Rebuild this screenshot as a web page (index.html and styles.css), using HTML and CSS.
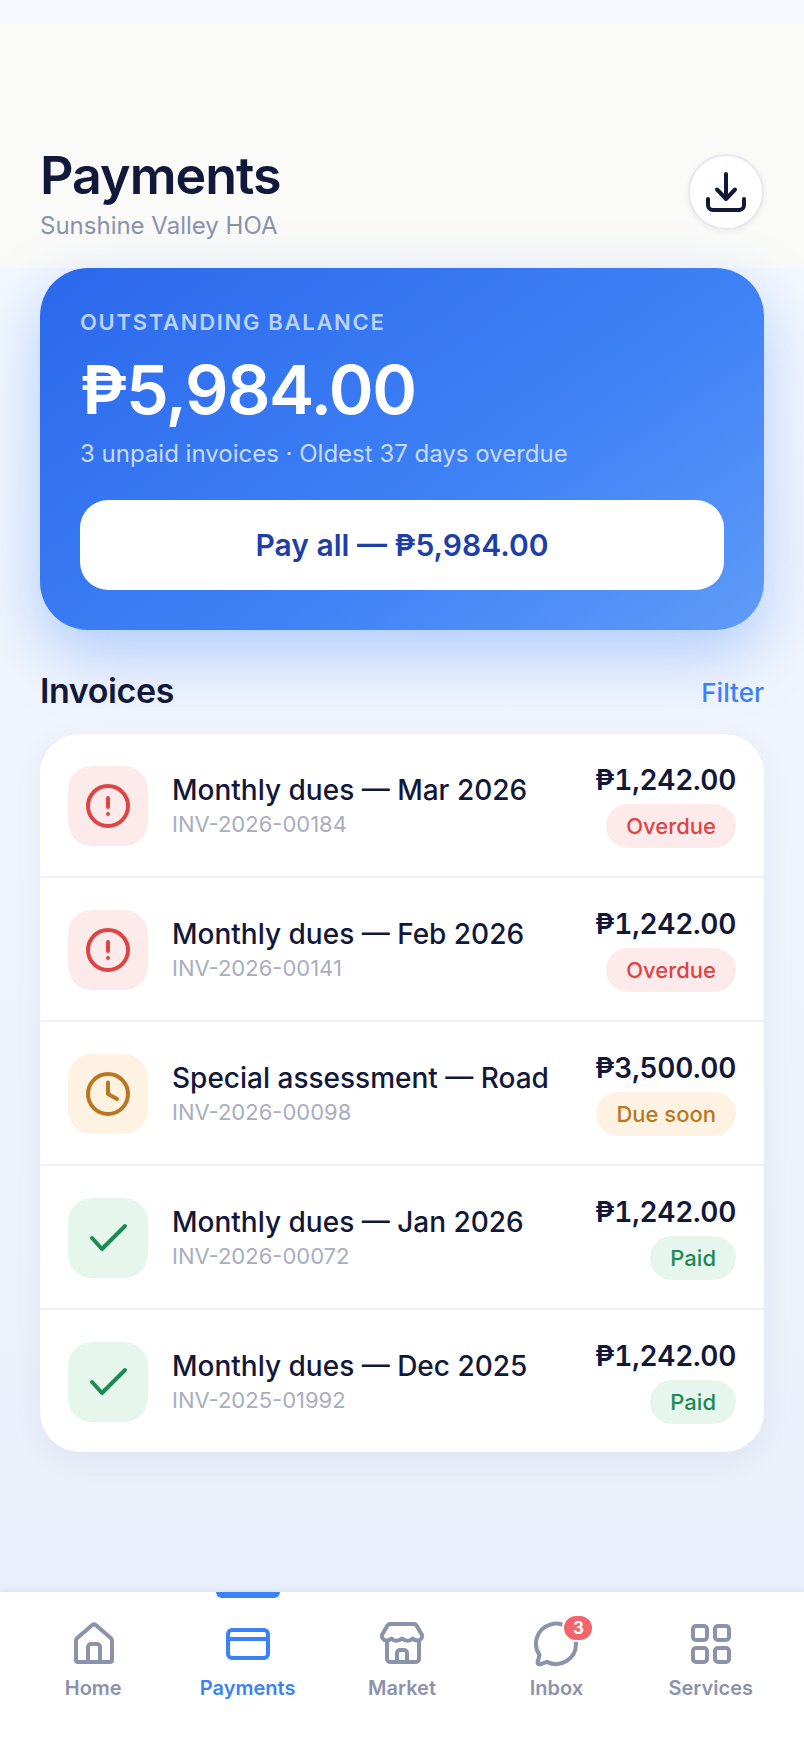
FILE: index.html
```html
<!DOCTYPE html>
<html lang="en">
<head>
  <meta charset="UTF-8" />
  <meta name="viewport" content="width=device-width, initial-scale=1.0" />
  <title>Payments</title>
  <link rel="stylesheet" href="styles.css">
</head>
<body>
  <div class="page">
    <header class="header">
      <div>
        <h1>Payments</h1>
        <p class="org">Sunshine Valley HOA</p>
      </div>
      <button class="download" aria-label="Download">
        <svg width="40" height="40" viewBox="0 0 40 40" fill="none" stroke="#12183a" stroke-width="4" stroke-linecap="round" stroke-linejoin="round">
          <path d="M20 2v25M11 17.500l9 9.500 9-9.500"/>
          <path d="M2 27v6a5 5 0 0 0 5 5h26a5 5 0 0 0 5-5v-6"/>
        </svg>
      </button>
    </header>

    <main class="main">
      <section class="balance">
        <div class="balance-label">OUTSTANDING BALANCE</div>
        <div class="balance-amount">₱5,984.00</div>
        <div class="balance-note">3 unpaid invoices · Oldest 37 days overdue</div>
        <button class="pay-all">Pay all — ₱5,984.00</button>
      </section>

      <div class="section-head">
        <h2>Invoices</h2>
        <a class="filter">Filter</a>
      </div>

      <section class="invoices">
        <div class="invoice">
          <div class="inv-icon red">
            <svg width="48" height="48" viewBox="0 0 48 48" fill="none" stroke="currentColor" stroke-width="4" stroke-linecap="round"><circle cx="24" cy="24" r="20"/><path d="M24 16v9"/><path d="M24 32v.1"/></svg>
          </div>
          <div class="inv-text">
            <div class="inv-title">Monthly dues — Mar 2026</div>
            <div class="inv-id">INV-2026-00184</div>
          </div>
          <div class="inv-right">
            <div class="inv-amount">₱1,242.00</div>
            <span class="pill red">Overdue</span>
          </div>
        </div>
        <div class="invoice">
          <div class="inv-icon red">
            <svg width="48" height="48" viewBox="0 0 48 48" fill="none" stroke="currentColor" stroke-width="4" stroke-linecap="round"><circle cx="24" cy="24" r="20"/><path d="M24 16v9"/><path d="M24 32v.1"/></svg>
          </div>
          <div class="inv-text">
            <div class="inv-title">Monthly dues — Feb 2026</div>
            <div class="inv-id">INV-2026-00141</div>
          </div>
          <div class="inv-right">
            <div class="inv-amount">₱1,242.00</div>
            <span class="pill red">Overdue</span>
          </div>
        </div>
        <div class="invoice">
          <div class="inv-icon amber">
            <svg width="48" height="48" viewBox="0 0 48 48" fill="none" stroke="currentColor" stroke-width="4" stroke-linecap="round" stroke-linejoin="round"><circle cx="24" cy="24" r="20"/><path d="M24 12.500V24l9 5"/></svg>
          </div>
          <div class="inv-text">
            <div class="inv-title">Special assessment — Road</div>
            <div class="inv-id">INV-2026-00098</div>
          </div>
          <div class="inv-right">
            <div class="inv-amount">₱3,500.00</div>
            <span class="pill amber">Due soon</span>
          </div>
        </div>
        <div class="invoice">
          <div class="inv-icon green">
            <svg width="48" height="48" viewBox="0 0 48 48" fill="none" stroke="currentColor" stroke-width="4" stroke-linecap="round" stroke-linejoin="round"><path d="M8 24l10 11L41 12"/></svg>
          </div>
          <div class="inv-text">
            <div class="inv-title">Monthly dues — Jan 2026</div>
            <div class="inv-id">INV-2026-00072</div>
          </div>
          <div class="inv-right">
            <div class="inv-amount">₱1,242.00</div>
            <span class="pill green">Paid</span>
          </div>
        </div>
        <div class="invoice">
          <div class="inv-icon green">
            <svg width="48" height="48" viewBox="0 0 48 48" fill="none" stroke="currentColor" stroke-width="4" stroke-linecap="round" stroke-linejoin="round"><path d="M8 24l10 11L41 12"/></svg>
          </div>
          <div class="inv-text">
            <div class="inv-title">Monthly dues — Dec 2025</div>
            <div class="inv-id">INV-2025-01992</div>
          </div>
          <div class="inv-right">
            <div class="inv-amount">₱1,242.00</div>
            <span class="pill green">Paid</span>
          </div>
        </div>
      </section>
    </main>

    <nav class="tabbar">
      <a class="tab">
        <svg width="48" height="48" viewBox="-1 0 48 48" fill="none" stroke="currentColor" stroke-width="4" stroke-linecap="round" stroke-linejoin="round"><path d="M6 20.500a3 3 0 0 1 1-2.200L22 5.200a3 3 0 0 1 4 0l15 13.100a3 3 0 0 1 1 2.200V40a2 2 0 0 1-2 2H8a2 2 0 0 1-2-2z"/><path d="M18 42V27a3 3 0 0 1 3-3h6a3 3 0 0 1 3 3v15"/></svg>
        <span>Home</span>
      </a>
      <a class="tab active">
        <span class="tab-mark"></span>
        <svg width="48" height="48" viewBox="0 0 48 48" fill="none" stroke="currentColor" stroke-width="4" stroke-linecap="round" stroke-linejoin="round"><rect x="4" y="10" width="40" height="28" rx="4"/><path d="M4 19h40"/></svg>
        <span>Payments</span>
      </a>
      <a class="tab">
        <svg width="48" height="48" viewBox="0 0 48 48" fill="none" stroke="currentColor" stroke-width="4" stroke-linecap="round" stroke-linejoin="round"><path d="M12 4h24c1.200 0 2 .5 2.600 1.500L44 15c.8 2-1 5-4 5.500-2.500.3-4-.5-5.500-2-2.500 3-7 3-10.500 0-3.500 3-8 3-10.500 0-1.500 1.500-3 2.300-5.500 2-3-.5-4.800-3.500-4-5.500L9.400 5.500C10 4.500 10.800 4 12 4z"/><path d="M9 21v18a3 3 0 0 0 3 3h26a3 3 0 0 0 3-3V21"/><path d="M19 42v-9a3 3 0 0 1 3-3h4a3 3 0 0 1 3 3v9"/></svg>
        <span>Market</span>
      </a>
      <a class="tab">
        <span class="tab-icon">
          <svg width="48" height="48" viewBox="0 0 48 48" fill="none" stroke="currentColor" stroke-width="4" stroke-linecap="round" stroke-linejoin="round"><path d="M44 24a20 20 0 0 1-29 17.900l-7 2.400a1.800 1.800 0 0 1-2.300-2.300L7.500 35A20 20 0 1 1 44 24z"/></svg>
          <b class="badge">3</b>
        </span>
        <span>Inbox</span>
      </a>
      <a class="tab">
        <svg width="48" height="48" viewBox="0 0 48 48" fill="none" stroke="currentColor" stroke-width="4" stroke-linecap="round" stroke-linejoin="round"><rect x="6" y="6" width="14" height="14" rx="3"/><rect x="28" y="6" width="14" height="14" rx="3"/><rect x="6" y="28" width="14" height="14" rx="3"/><rect x="28" y="28" width="14" height="14" rx="3"/></svg>
        <span>Services</span>
      </a>
    </nav>
  </div>
</body>
</html>
```

FILE: styles.css
```css
* {
  box-sizing: border-box;
}
body {
  margin: 0;
  font-family: Inter, "Liberation Sans", sans-serif;
  color: #12183a;
}
h1, h2, p {
  margin: 0;
}
button {
  font-family: inherit;
  border: none;
}
.page {
  height: 1748px;
  display: flex;
  flex-direction: column;
  padding-top: 24px;
  background: linear-gradient(180deg, #f6f9ff 0%, #e8eefa 100%);
  overflow: hidden;
}
.header {
  height: 244px;
  flex: none;
  background: #fafaf8;
  display: flex;
  justify-content: space-between;
  align-items: flex-end;
  padding: 0 40px 26px;
}
.header h1 {
  font-size: 52px;
  line-height: 60px;
  font-weight: 600;
  letter-spacing: -1px;
}
.org {
  font-size: 24px;
  line-height: 32px;
  margin-top: 4px;
  color: #8b93ab;
}
.download {
  width: 76px;
  height: 76px;
  border-radius: 50%;
  background: #fff;
  border: 2px solid #e8e9f0;
  box-shadow: 0 2px 6px rgba(20, 26, 56, .06);
  display: flex;
  align-items: center;
  justify-content: center;
  padding: 0;
  margin-bottom: 12px;
}
.main {
  flex: 1;
  padding: 0 40px;
}
.balance {
  height: 362px;
  border-radius: 48px;
  padding: 42px 40px 0;
  background: linear-gradient(145deg, #2b68ec 0%, #3e82f6 60%, #5f9bf8 100%);
  box-shadow: 0 24px 64px rgba(59, 130, 246, .36);
  color: #fff;
}
.balance-label {
  font-size: 22px;
  line-height: 24px;
  font-weight: 600;
  letter-spacing: 1.700px;
  color: #bcd2fb;
}
.balance-amount {
  font-size: 68px;
  line-height: 80px;
  font-weight: 600;
  letter-spacing: -1.500px;
  margin-top: 15px;
}
.balance-note {
  font-size: 24px;
  line-height: 32px;
  margin-top: 9px;
  color: #c9dafc;
}
.pay-all {
  display: block;
  width: 100%;
  height: 90px;
  margin-top: 30px;
  background: #fff;
  border-radius: 28px;
  color: #1e3fa8;
  font-size: 30px;
  font-weight: 600;
}
.section-head {
  display: flex;
  justify-content: space-between;
  align-items: center;
  margin-top: 40px;
  height: 44px;
}
.section-head h2 {
  font-size: 34px;
  font-weight: 600;
  letter-spacing: -.4px;
  margin-bottom: 4px;
}
.filter {
  font-size: 26px;
  font-weight: 500;
  color: #3b82f6;
}
.invoices {
  margin-top: 20px;
  background: #fff;
  border-radius: 40px;
  box-shadow: 0 8px 32px rgba(20, 26, 56, .05);
}
.invoice {
  height: 144px;
  display: flex;
  align-items: center;
  padding: 2px 28px 0;
  border-bottom: 2px solid #f0f1f6;
}
.invoice:last-child {
  border-bottom: none;
  height: 142px;
}
.inv-icon {
  width: 80px;
  height: 80px;
  flex: none;
  border-radius: 24px;
  display: flex;
  align-items: center;
  justify-content: center;
}
.red {
  background: #fdeaea;
  color: #df4444;
}
.amber {
  background: #fef2e2;
  color: #b9771f;
}
.green {
  background: #e6f6ec;
  color: #1b8a55;
}
.inv-text {
  flex: 1;
  margin-left: 24px;
}
.inv-title {
  font-size: 28px;
  line-height: 32px;
  font-weight: 500;
}
.inv-id {
  font-size: 22px;
  line-height: 28px;
  margin-top: 4px;
  color: #a8aec0;
}
.inv-right {
  display: flex;
  flex-direction: column;
  align-items: flex-end;
  padding-bottom: 2px;
}
.inv-amount {
  font-size: 28px;
  line-height: 36px;
  font-weight: 600;
  letter-spacing: -.25px;
  font-variant-numeric: tabular-nums;
}
.pill {
  margin-top: 6px;
  height: 44px;
  line-height: 44px;
  padding: 0 20px;
  border-radius: 22px;
  font-size: 22px;
  font-weight: 500;
}
.tabbar {
  height: 156px;
  flex: none;
  background: #fff;
  box-shadow: 0 -2px 6px rgba(20, 26, 56, .06);
  display: grid;
  grid-template-columns: repeat(5, 1fr);
  padding: 0 16px;
}
.tab {
  position: relative;
  display: flex;
  flex-direction: column;
  align-items: center;
  padding-top: 28px;
  color: #8b93ab;
  font-size: 20px;
  font-weight: 600;
}
.tab > span:last-child {
  margin-top: 6px;
  line-height: 28px;
}
.tab.active {
  color: #3b82f6;
}
.tab-mark {
  position: absolute;
  top: 0;
  left: 50%;
  width: 64px;
  height: 6px;
  margin-left: -32px;
  background: #3b82f6;
  border-radius: 0 0 6px 6px;
}
.tab-icon {
  position: relative;
  display: block;
  height: 48px;
}
.badge {
  position: absolute;
  top: -6px;
  left: 30px;
  width: 32px;
  height: 28px;
  border: 2px solid #fff;
  border-radius: 14px;
  background: #f4646a;
  color: #fff;
  font-size: 17px;
  line-height: 24px;
  font-weight: 700;
  text-align: center;
}
```
